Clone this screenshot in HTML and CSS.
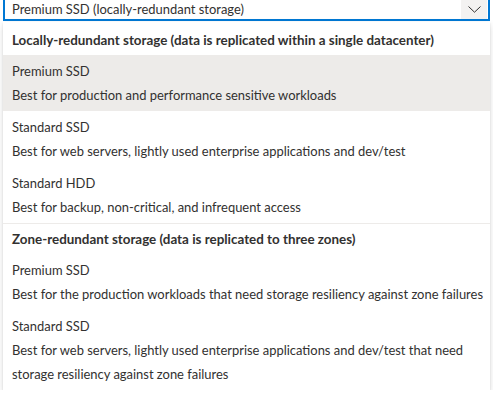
FILE: index.html
```html
<!DOCTYPE html>
<html>
<head>
<meta charset="utf-8">
<link rel="stylesheet" href="styles.css">
</head>
<body>
<div class="field">
  <div class="field-text">Premium SSD (locally-redundant storage)</div>
  <div class="chevron">
    <svg width="13" height="7" viewBox="0 0 13 7"><path d="M0.5 0.5 L6.5 6.2 L12.5 0.5" fill="none" stroke="#323130" stroke-width="1"/></svg>
  </div>
</div>
<div class="menu">
  <div class="group-header">Locally-redundant storage (data is replicated within a single datacenter)</div>
  <div class="option selected">
    <div class="opt-title">Premium SSD</div>
    <div class="opt-desc">Best for production and performance sensitive workloads</div>
  </div>
  <div class="option">
    <div class="opt-title">Standard SSD</div>
    <div class="opt-desc">Best for web servers, lightly used enterprise applications and dev/test</div>
  </div>
  <div class="option">
    <div class="opt-title">Standard HDD</div>
    <div class="opt-desc">Best for backup, non-critical, and infrequent access</div>
  </div>
  <div class="divider"></div>
  <div class="group-header">Zone-redundant storage (data is replicated to three zones)</div>
  <div class="option">
    <div class="opt-title">Premium SSD</div>
    <div class="opt-desc">Best for the production workloads that need storage resiliency against zone failures</div>
  </div>
  <div class="option">
    <div class="opt-title">Standard SSD</div>
    <div class="opt-desc">Best for web servers, lightly used enterprise applications and dev/test that need storage resiliency against zone failures</div>
  </div>
</div>
</body>
</html>
```
FILE: styles.css
```css
html, body {
  margin: 0;
  padding: 0;
  background: #ffffff;
  overflow: hidden;
}
body {
  font-family: Lato, "Liberation Sans", sans-serif;
  font-size: 12.95px;
  color: #323130;
}
.field {
  box-sizing: border-box;
  margin: -3px 3px 0 3px;
  height: 24px;
  border: 2px solid #0078d4;
  display: flex;
  align-items: stretch;
}
.field-text {
  flex: 1;
  padding-left: 7px;
  display: flex;
  align-items: center;
  white-space: nowrap;
}
.chevron {
  width: 26px;
  margin-right: 1px;
  background: #f3f2f1;
  display: flex;
  align-items: center;
  justify-content: center;
}
.chevron svg { display: block; }
.menu {
  margin: 1px 3px 0 3px;
  padding-top: 3px;
  background: #ffffff;
  box-shadow: 0 3.2px 7.2px rgba(0,0,0,0.13), 0 0.6px 1.8px rgba(0,0,0,0.11);
}
.group-header {
  height: 30px;
  padding-left: 9px;
  display: flex;
  align-items: center;
  font-weight: 700;
  font-size: 13.4px;
  white-space: nowrap;
}
.option {
  padding: 4px 0 4px 9px;
}
.option.selected {
  background: #edebe9;
}
.opt-title, .opt-desc {
  line-height: 24px;
}
.divider {
  height: 1px;
  background: #edebe9;
}
```
